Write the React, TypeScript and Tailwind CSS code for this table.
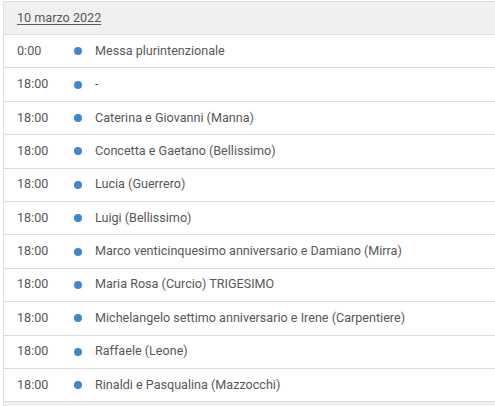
const rows: { time: string; text: string }[] = [
  { time: "0:00", text: "Messa plurintenzionale" },
  { time: "18:00", text: "-" },
  { time: "18:00", text: "Caterina e Giovanni (Manna)" },
  { time: "18:00", text: "Concetta e Gaetano (Bellissimo)" },
  { time: "18:00", text: "Lucia (Guerrero)" },
  { time: "18:00", text: "Luigi (Bellissimo)" },
  { time: "18:00", text: "Marco venticinquesimo anniversario e Damiano (Mirra)" },
  { time: "18:00", text: "Maria Rosa (Curcio) TRIGESIMO" },
  { time: "18:00", text: "Michelangelo settimo anniversario e Irene (Carpentiere)" },
  { time: "18:00", text: "Raffaele (Leone)" },
  { time: "18:00", text: "Rinaldi e Pasqualina (Mazzocchi)" },
];

export default function App() {
  return (
    <div className="h-[406px] w-[495px] overflow-hidden bg-white pt-px pl-[3px] font-['Roboto',sans-serif] text-[12.6px] text-[#585858]">
      <div className="border-t border-l border-[#ddd]">
        <div className="flex h-[33px] items-center border-b border-[#ddd] bg-[#f0f0f0] pl-[13px]">
          <span className="underline underline-offset-2">10 marzo 2022</span>
        </div>
        {rows.map((r, i) => (
          <div
            key={i}
            className="flex h-[33.4px] items-center border-b border-[#ddd]"
          >
            <span className="w-[70px] shrink-0 pl-[13px]">{r.time}</span>
            <span className="h-2 w-2 shrink-0 rounded-full bg-[#3a87d6]" />
            <span className="pl-[13px]">{r.text}</span>
          </div>
        ))}
        <div className="h-4 bg-[#f0f0f0]" />
      </div>
    </div>
  );
}
